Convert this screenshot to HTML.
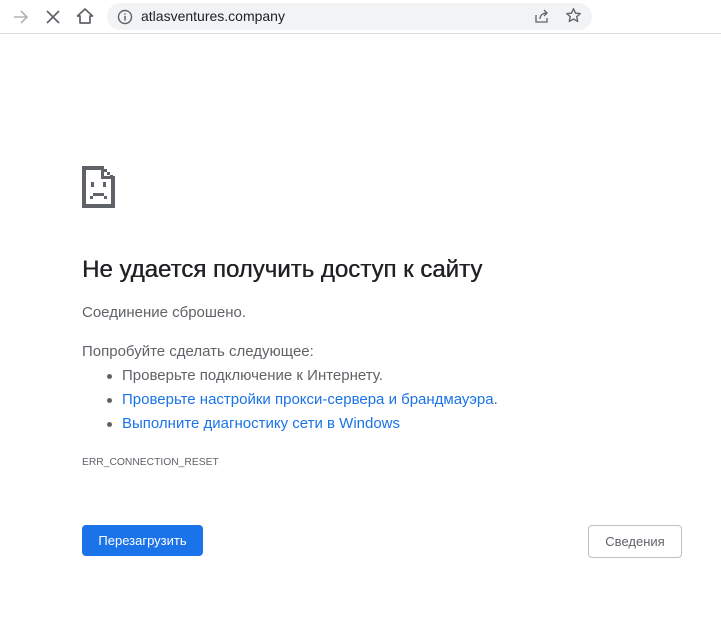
<!DOCTYPE html>
<html><head><meta charset="utf-8"><style>
*{margin:0;padding:0;box-sizing:border-box}
body{width:721px;height:627px;background:#fff;font-family:"Liberation Sans",sans-serif;position:relative;overflow:hidden;color:#5f6368}
.bar{position:absolute;left:0;top:0;width:721px;height:34px;background:#fff;border-bottom:1px solid #dadce0}
.omni{position:absolute;left:107px;top:3px;width:485px;height:27px;background:#f1f3f4;border-radius:14px}
.url{position:absolute;left:141px;top:8px;font-size:14px;color:#202124}
.a{position:absolute;white-space:nowrap}
h1{position:absolute;left:82px;top:256px;font-size:24px;font-weight:normal;color:#202124;white-space:nowrap;text-shadow:0.4px 0 0 #202124}
.t{font-size:15px;color:#5f6368}
.l{color:#1a73e8}
.dot{position:absolute;width:5px;height:5px;border-radius:50%;background:#5f6368;left:107px}
.btn1{position:absolute;left:82px;top:525px;width:121px;height:31px;background:#1a73e8;border-radius:4px;color:#fff;font-size:13px;text-align:center;line-height:31px}
.btn2{position:absolute;left:588px;top:525px;width:94px;height:33px;border:1px solid #bdc1c6;border-radius:4px;color:#5f6368;font-size:13px;text-align:center;line-height:31px}
</style></head><body>
<div class="bar">
<svg style="position:absolute;left:12px;top:8px" width="18" height="18" viewBox="0 0 18 18"><path d="M2 9h13M9 3l6 6-6 6" stroke="#b0b3b8" stroke-width="1.6" fill="none"/></svg>
<svg style="position:absolute;left:44px;top:8px" width="18" height="18" viewBox="0 0 18 18"><path d="M3 3l12 12M15 3L3 15" stroke="#5f6368" stroke-width="1.7"/></svg>
<svg style="position:absolute;left:75px;top:6px" width="20" height="20" viewBox="0 0 20 20"><path d="M10 3L2.5 10H5v7h10v-7h2.5z" stroke="#5f6368" stroke-width="1.7" fill="none" stroke-linejoin="round"/></svg>
<div class="omni"></div>
<svg style="position:absolute;left:117px;top:9px" width="16" height="16" viewBox="0 0 16 16"><circle cx="8" cy="8" r="6.5" stroke="#5f6368" stroke-width="1.4" fill="none"/><path d="M8 7v4.5M8 4.5v1.3" stroke="#5f6368" stroke-width="1.5"/></svg>
<div class="url">atlasventures.company</div>
<svg style="position:absolute;left:534px;top:8px" width="16" height="16" viewBox="0 0 16 16"><path d="M2 7v7h11V10M6 11c0-4 3-6 7-6M10 2l3 3-3 3" stroke="#5f6368" stroke-width="1.3" fill="none"/></svg>
<svg style="position:absolute;left:565px;top:7px" width="17" height="17" viewBox="0 0 24 24"><path d="M12 2.5l2.9 6.2 6.6.6-5 4.5 1.5 6.6L12 17l-6 3.4 1.5-6.6-5-4.5 6.6-.6z" stroke="#5f6368" stroke-width="1.9" fill="none" stroke-linejoin="round"/></svg>
</div>
<svg style="position:absolute;left:82px;top:166px" width="33" height="42" viewBox="0 0 33 42" shape-rendering="crispEdges" fill="#5f6368">
<rect x="0" y="0" width="4" height="42"/><rect x="0" y="38" width="33" height="4"/><rect x="29" y="12" width="4" height="30"/>
<rect x="0" y="0" width="21" height="4"/><rect x="19" y="0" width="3" height="13"/><rect x="19" y="10" width="14" height="3"/>
<rect x="22" y="3" width="3" height="3"/><rect x="25" y="6" width="3" height="3"/><rect x="28" y="9" width="3" height="3"/>
<rect x="9" y="16" width="3" height="5"/><rect x="21" y="16" width="3" height="5"/>
<rect x="11" y="27" width="11" height="3"/><rect x="8" y="30" width="3" height="3"/><rect x="22" y="30" width="3" height="3"/>
</svg>
<h1>Не удается получить доступ к сайту</h1>
<div class="a t" style="left:82px;top:304px">Соединение сброшено.</div>
<div class="a t" style="left:82px;top:343px">Попробуйте сделать следующее:</div>
<div class="dot" style="top:374px"></div>
<div class="dot" style="top:398px"></div>
<div class="dot" style="top:422px"></div>
<div class="a t" style="left:122px;top:367px">Проверьте подключение к Интернету.</div>
<div class="a t" style="left:122px;top:391px"><span class="l">Проверьте настройки прокси-сервера и брандмауэра</span>.</div>
<div class="a t l" style="left:122px;top:415px">Выполните диагностику сети в Windows</div>
<div class="a" style="left:82px;top:457px;font-size:10.3px;color:#5f6368">ERR_CONNECTION_RESET</div>
<div class="btn1">Перезагрузить</div>
<div class="btn2">Сведения</div>
</body></html>
